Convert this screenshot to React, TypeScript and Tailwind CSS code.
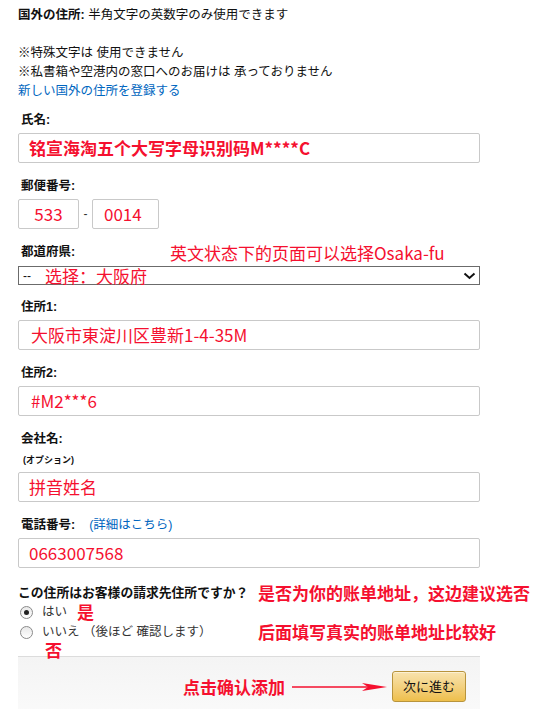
import React from 'react'

const jp = { fontFamily: '"Liberation Sans", "Noto Sans CJK JP", sans-serif' }
const sc = { fontFamily: '"Noto Sans CJK SC", "Liberation Sans", sans-serif' }

const Label = ({ children, className = '' }: { children: React.ReactNode; className?: string }) => (
  <div className={`pl-[3px] text-[12.5px] leading-[19px] font-bold text-[#111] whitespace-nowrap ${className}`} style={jp}>
    {children}
  </div>
)

const Field = ({ value, bold = false, className = '' }: { value: string; bold?: boolean; className?: string }) => (
  <div
    className={`mt-[3px] h-[30px] w-[462px] border border-[#c9c9c9] rounded-[2px] bg-white flex items-center pl-[10px] text-[17px] text-[#f5102f] ${bold ? 'font-bold' : ''} ${className}`}
    style={sc}
  >
    {value}
  </div>
)

const Radio = ({ checked }: { checked: boolean }) => (
  <span className="inline-flex shrink-0 w-[13px] h-[13px] rounded-full border border-[#8a8a8a] bg-gradient-to-b from-[#e8e8e8] to-white items-center justify-center">
    {checked && <span className="w-[5px] h-[5px] rounded-full bg-[#222]" />}
  </span>
)

export default function App() {
  return (
    <div className="min-h-[709px] w-[541px] bg-white overflow-hidden">
      <div className="pl-[18px] w-[480px]">
        <div className="pt-[6px] text-[12.5px] leading-[19px] text-[#111]" style={jp}>
          <div>
            <span className="font-bold">国外の住所:</span> 半角文字の英数字のみ使用できます
          </div>
          <div>&nbsp;</div>
          <div>※特殊文字は 使用できません</div>
          <div>※私書箱や空港内の窓口へのお届けは 承っておりません</div>
          <div className="text-[#0066c0]">新しい国外の住所を登録する</div>
        </div>

        <Label className="mt-[10px]">氏名:</Label>
        <Field value="铭宣海淘五个大写字母识别码M****C" bold />

        <Label className="mt-[14px]">郵便番号:</Label>
        <div className="mt-[3px] flex items-center">
          <div className="h-[30px] w-[61px] border border-[#c9c9c9] rounded-[2px] flex items-center justify-center text-[17px] text-[#f5102f]" style={sc}>
            533
          </div>
          <span className="w-[13px] text-center text-[12px] text-[#333]" style={jp}>-</span>
          <div className="h-[30px] w-[67px] border border-[#c9c9c9] rounded-[2px] flex items-center pl-[11px] text-[17px] text-[#f5102f]" style={sc}>
            0014
          </div>
        </div>

        <div className="mt-[14px] flex items-center h-[19px]">
          <Label className="w-[152px]">都道府県:</Label>
          <span className="text-[17px] text-[#f5102f] whitespace-nowrap" style={sc}>英文状态下的页面可以选择Osaka-fu</span>
        </div>
        <div className="mt-[4px] h-[19px] w-[462px] border border-[#6b6b6b] flex items-center pl-[4px] pr-[3px]">
          <span className="text-[12px] text-[#111] w-[22px]" style={jp}>--</span>
          <span className="text-[17px] leading-[17px] text-[#f5102f]" style={sc}>选择：大阪府</span>
          <svg className="ml-auto" width="13" height="8" viewBox="0 0 13 8">
            <path d="M1.5 1.5 L6.5 6 L11.5 1.5" fill="none" stroke="#111" strokeWidth="2" />
          </svg>
        </div>

        <Label className="mt-[13px]">住所1:</Label>
        <Field value="大阪市東淀川区豊新1-4-35M" className="pl-[12px]" />

        <Label className="mt-[14px]">住所2:</Label>
        <Field value="#M2***6" className="pl-[12px]" />

        <Label className="mt-[14px]">会社名:</Label>
        <div className="mt-[3px] pl-[5px] text-[9px] leading-[16px] font-bold text-[#111]" style={jp}>
          (オプション)
        </div>
        <Field value="拼音姓名" className="mt-[4px]" />

        <div className="mt-[14px] flex items-center h-[19px]">
          <Label>電話番号:</Label>
          <span className="ml-[14px] text-[12.5px] text-[#0066c0]" style={jp}>(詳細はこちら)</span>
        </div>
        <Field value="0663007568" />

        <div className="mt-[15px] flex items-center h-[19px] whitespace-nowrap">
          <span className="w-[240px] shrink-0 text-[12.8px] font-bold text-[#111]" style={jp}>
            この住所はお客様の請求先住所ですか？
          </span>
          <span className="text-[17px] font-bold text-[#f5102f]" style={sc}>
            是否为你的账单地址，这边建议选否
          </span>
        </div>
        <div className="flex items-center h-[20px] pl-[2px] whitespace-nowrap">
          <Radio checked />
          <span className="ml-[9px] text-[12.5px] text-[#333]" style={jp}>はい</span>
          <span className="ml-[10px] text-[17px] font-bold text-[#f5102f]" style={sc}>是</span>
        </div>
        <div className="flex items-center h-[20px] pl-[2px] whitespace-nowrap">
          <Radio checked={false} />
          <span className="ml-[9px] w-[216px] shrink-0 text-[12.5px] text-[#333]" style={jp}>
            いいえ （後ほど 確認します）
          </span>
          <span className="text-[17px] font-bold text-[#f5102f]" style={sc}>后面填写真实的账单地址比较好</span>
        </div>
        <div className="h-[14px] pl-[27px] text-[17px] leading-[16px] font-bold text-[#f5102f]" style={sc}>
          否
        </div>

        <div className="w-[462px] h-[60px] border-t border-[#dcdcdc] bg-gradient-to-b from-[#f4f4f4] to-[#fafafa] flex items-start justify-end pt-[14px] pr-[14px]">
          <div className="flex items-center h-[31px] mr-[4px]">
            <span className="text-[17px] font-bold text-[#f5102f]" style={sc}>点击确认添加</span>
            <svg className="ml-[7px]" width="96" height="10" viewBox="0 0 96 10">
              <path d="M0 5 L80 5" stroke="#f5102f" strokeWidth="1.5" />
              <path d="M70 1 L95 5 L70 9 L76 5 Z" fill="#f5102f" />
            </svg>
          </div>
          <button
            className="h-[31px] w-[74px] rounded-[3px] border border-[#b8943c] bg-gradient-to-b from-[#f8e3ad] to-[#eebf4a] text-[13px] text-[#111] shadow-[inset_0_1px_0_#fcf1d3]"
            style={jp}
          >
            次に進む
          </button>
        </div>
      </div>
    </div>
  )
}
